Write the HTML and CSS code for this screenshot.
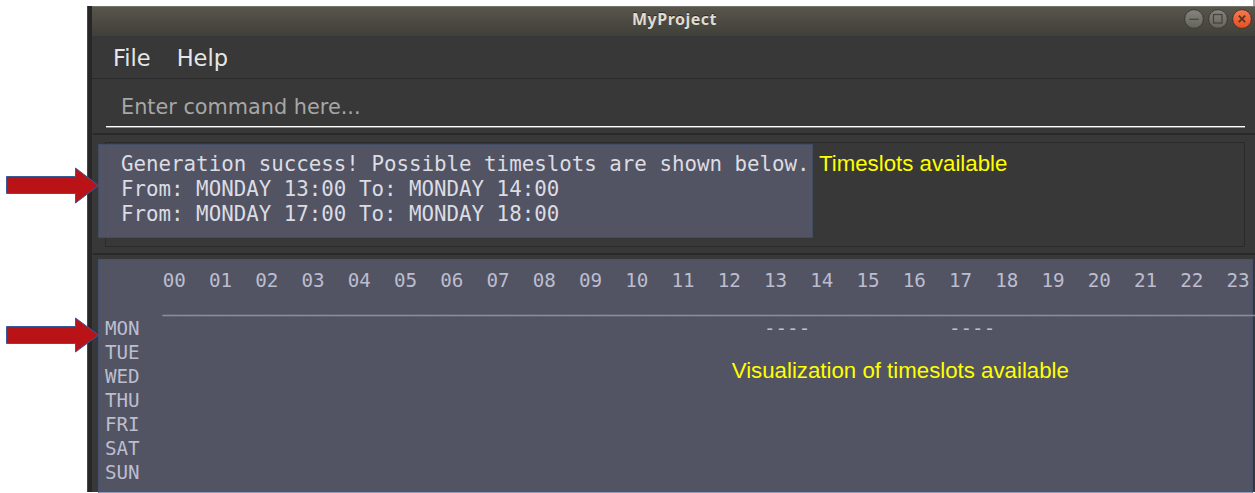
FILE: index.html
```html
<!DOCTYPE html>
<html lang="en">
<head>
<meta charset="utf-8">
<title>MyProject</title>
<link rel="stylesheet" href="styles.css">
</head>
<body>
<div class="page">
  <main class="window">
    <header class="titlebar">
      <h1 class="title">MyProject</h1>
      <div class="controls">
        <svg class="ctl" viewBox="0 0 20 20"><circle cx="10" cy="10" r="9.4" fill="url(#g)" stroke="#3a3934"/><path d="M5.3 10.3h9.4" stroke="#45443e" stroke-width="1.2"/></svg>
        <svg class="ctl" viewBox="0 0 20 20"><circle cx="10" cy="10" r="9.4" fill="url(#g)" stroke="#3a3934"/><rect x="5.5" y="5.5" width="8.5" height="8.5" fill="none" stroke="#45443e" stroke-width="1.3"/></svg>
        <svg class="ctl" viewBox="0 0 20 20"><circle cx="10" cy="10" r="9.4" fill="url(#o)" stroke="#3f352f"/><path d="M6.8 6.7l6.4 6.4M13.2 6.7l-6.4 6.4" stroke="#593423" stroke-width="1.8"/></svg>
        <svg class="defs"><defs>
          <linearGradient id="g" x2="0" y2="1"><stop stop-color="#85847e"/><stop offset="1" stop-color="#64635c"/></linearGradient>
          <linearGradient id="o" x2="0" y2="1"><stop stop-color="#f57a52"/><stop offset="1" stop-color="#e5501f"/></linearGradient>
        </defs></svg>
      </div>
    </header>
    <nav class="menu"><span>File</span><span>Help</span></nav>
    <section class="command"><div class="field">Enter command here...</div></section>
    <section class="result">
      <div class="result-frame"></div>
      <div class="highlight"><pre class="message">Generation success! Possible timeslots are shown below.
From: MONDAY 13:00 To: MONDAY 14:00
From: MONDAY 17:00 To: MONDAY 18:00</pre></div>
      <span class="note">Timeslots available</span>
    </section>
    <section class="schedule">
      <div class="grid">
        <pre class="times">     00  01  02  03  04  05  06  07  08  09  10  11  12  13  14  15  16  17  18  19  20  21  22  23</pre>
        <pre class="times rule">______________________________________________________________________________________________</pre>
        <pre class="times">MON                                                      ----            ----</pre>
        <div class="rest">
          <pre class="times">TUE
WED
THU
FRI
SAT
SUN</pre>
          <span class="note visual">Visualization of timeslots available</span>
        </div>
      </div>
    </section>
  </main>
  <svg class="arrow first" viewBox="0 0 94 37"><path d="M.5 9.5h69V1L92.5 18.5 69.5 36v-9.5H.5z" fill="#b91318" stroke="#355c9c"/></svg>
  <svg class="arrow second" viewBox="0 0 94 37"><path d="M.5 10.5h69V2L92.5 19 69.5 36v-8.5H.5z" fill="#b91318" stroke="#355c9c"/></svg>
</div>
</body>
</html>
```
FILE: styles.css
```css
* { box-sizing: border-box; }
body { margin: 0; background: #fff; overflow: hidden; }
.page { position: relative; height: 493px; padding: 6px 0 0 87px; background: linear-gradient(#aaa, #aaa) right top / 2px 6px no-repeat; }
.window { height: 486px; display: flex; flex-direction: column; background: #383838; border-left: 1px solid #464646; box-shadow: inset 4px 0 #272727; }
.titlebar { flex: 0 0 30px; margin-left: 4px; display: flex; align-items: center; justify-content: space-between; padding: 0 3px 0 540px; background: linear-gradient(#58554c, #403f39); border-top: 1px solid #73716a; }
.title { margin: -6px 0 0; font: 700 16px/20px "Noto Sans", sans-serif; letter-spacing: .5px; color: #dfdbd2; text-shadow: 0 -1px #2c2b27; }
.controls { display: flex; gap: 4px; margin-top: -5px; }
.ctl { width: 20px; height: 20px; }
.defs { position: absolute; width: 0; height: 0; }
.menu { flex: 0 0 43px; margin-left: 4px; padding: 9px 21px 0; display: flex; gap: 26px; font: 22.5px/26px "DejaVu Sans", sans-serif; color: #e6e6e6; border-bottom: 1px solid #2a2a2a; }
.command { flex: 0 0 56px; margin-left: 5px; padding: 13px 10px 0 13px; border-bottom: 2px solid #2a2a2a; }
.field { height: 35px; padding: 2px 15px; font: 20.8px/26px "DejaVu Sans", sans-serif; color: #a7a7a7; border-bottom: 1px solid #fff; box-shadow: 0 1px #8a8a8a; }
.result { flex: 0 0 120px; margin-left: 5px; padding: 9px 0 0 5px; display: flex; position: relative; border-bottom: 2px solid #2a2a2a; }
.result-frame { position: absolute; inset: 7px 10px 6px 12px; border: 1px solid #2a2a2a; }
.highlight { position: relative; width: 715px; height: 94px; padding: 7px 0 0 22px; background: rgba(86, 88, 107, .86); border: 1px solid #414c65; }
.message { margin: 0; font: 20.8px/25.2px "DejaVu Sans Mono", monospace; color: #dcdce2; }
.note { position: relative; margin: 7px 0 0 6px; font: 22.25px/26px "Liberation Sans", sans-serif; color: #ff0; white-space: nowrap; }
.schedule { flex: 0 0 238px; margin-left: 5px; padding: 4px 2px 0 5px; }
.grid { height: 234px; padding: 9px 0 0 6px; background: #525463; border: 1px solid #465170; border-bottom-color: #8f9bb8; }
.times { height: 24px; margin: 0; font: 19.22px/24px "DejaVu Sans Mono", monospace; color: #bcbdcf; }
.rule { width: 1093px; margin-left: 57.8px; letter-spacing: .06px; color: #8b8d9c; -webkit-text-stroke: .7px #8b8d9c; }
.rest { display: flex; }
.rest .times { height: 144px; }
.visual { margin: 17px 0 0 592px; }
.arrow { position: absolute; left: 6px; width: 94px; height: 37px; }
.first { top: 167px; }
.second { top: 316px; }
```
